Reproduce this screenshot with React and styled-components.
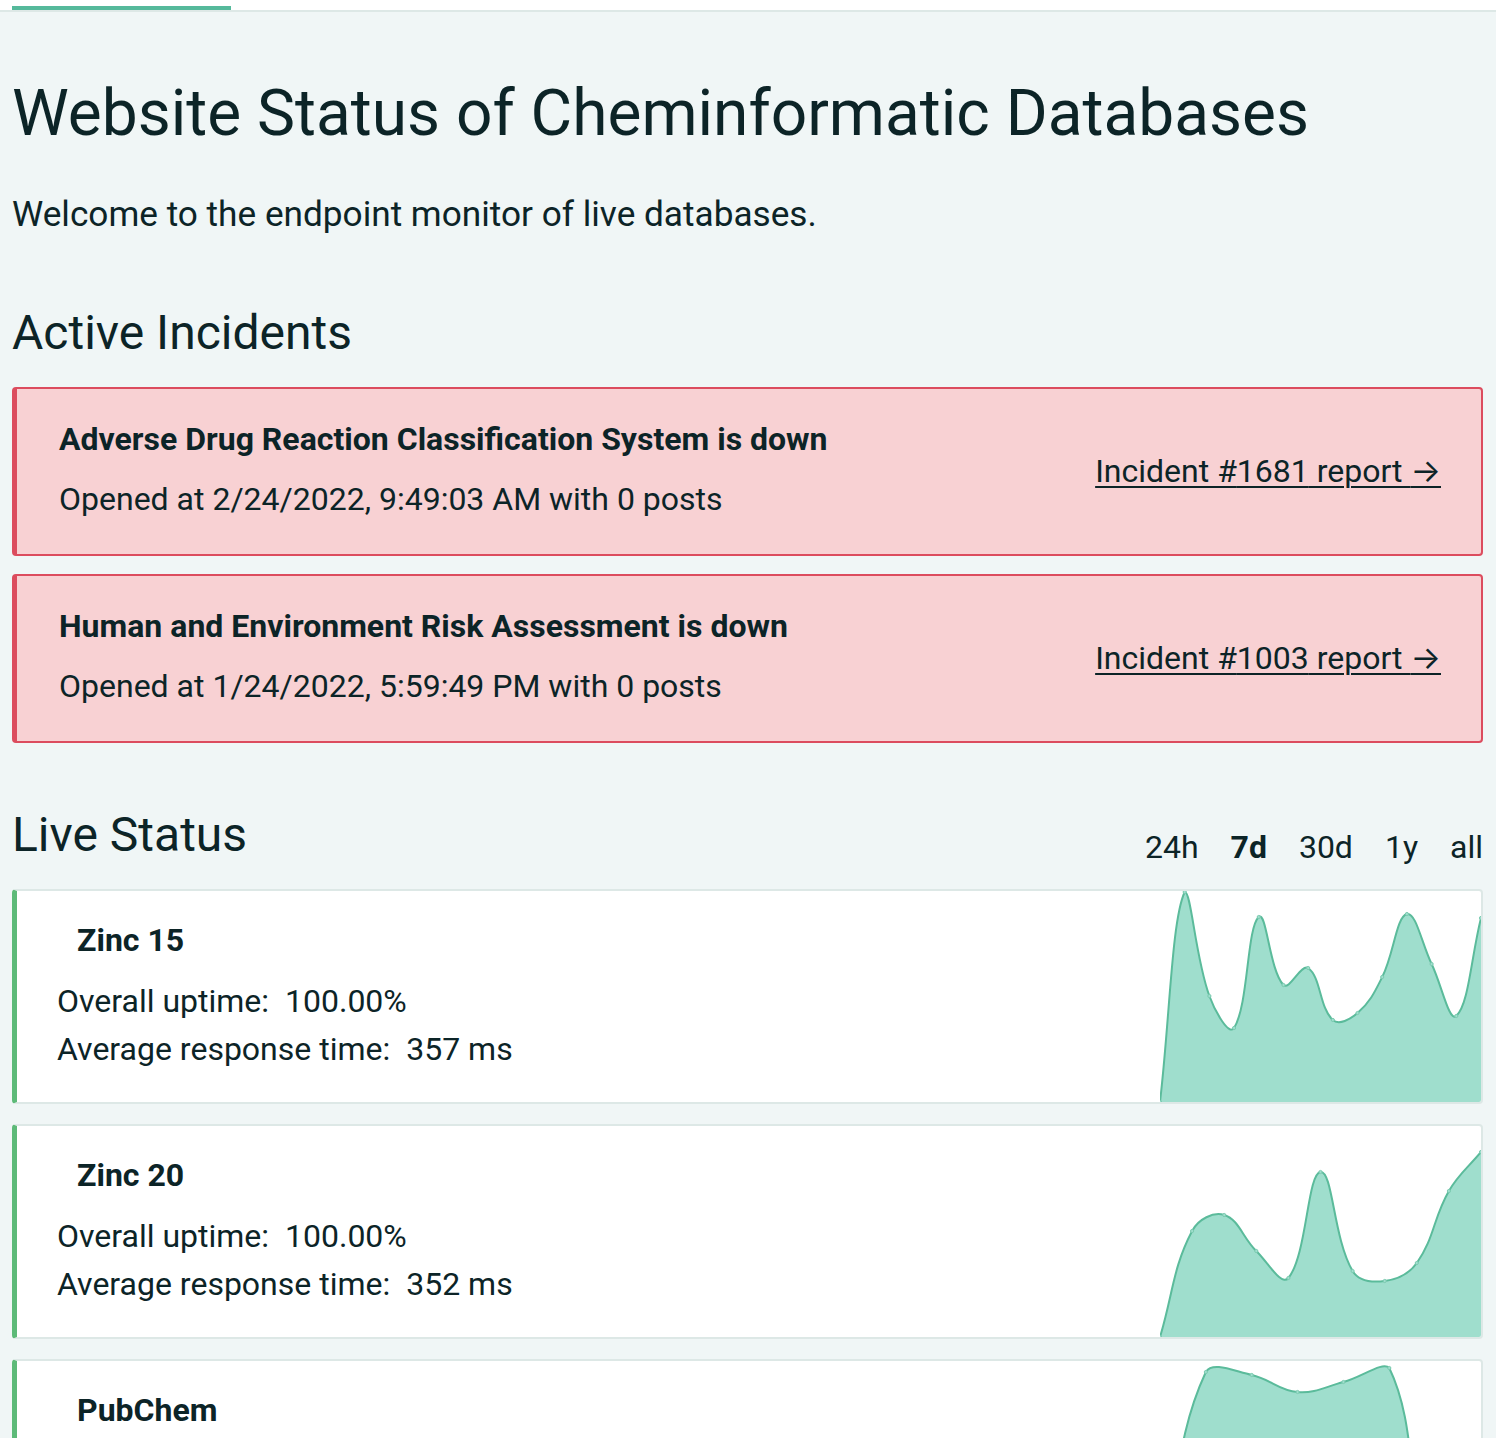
import React from "react";
import styled, { createGlobalStyle } from "styled-components";

const GlobalStyle = createGlobalStyle`
  body {
    margin: 0;
    background-color: #f0f6f6;
    color: #0c2427;
    font-family: Roboto, "Liberation Sans", sans-serif;
  }
`;

const incidents = [
  {
    id: 1681,
    title: "Adverse Drug Reaction Classification System is down",
    opened: "2/24/2022, 9:49:03 AM",
  },
  {
    id: 1003,
    title: "Human and Environment Risk Assessment is down",
    opened: "1/24/2022, 5:59:49 PM",
  },
];

const sites = [
  {
    name: "Zinc 15",
    uptime: "100.00%",
    time: "357 ms",
    points: [211, 1, 105, 137, 26, 94, 77, 129, 122, 86, 23, 73, 125, 27],
  },
  {
    name: "Zinc 20",
    uptime: "100.00%",
    time: "352 ms",
    points: [211, 105, 89, 125, 152, 46, 145, 155, 137, 65, 26],
  },
  {
    name: "PubChem",
    uptime: "100.00%",
    time: "410 ms",
    points: [211, 11, 14, 31, 21, 7, 211, 211],
  },
];

const ranges = ["24h", "7d", "30d", "1y", "all"];

const CHART_W = 321;
const CHART_H = 211;

// same spline as chart.js with tension 0.4
function splinePath(values) {
  const n = values.length;
  const pts = values.map((v, i) => ({ x: (i * CHART_W) / (n - 1), y: v }));
  const clamp = (v, max) => Math.max(0, Math.min(max, v));
  const cps = pts.map((p, i) => {
    const prev = pts[i - 1] || p;
    const next = pts[i + 1] || p;
    const d01 = Math.hypot(p.x - prev.x, p.y - prev.y);
    const d12 = Math.hypot(next.x - p.x, next.y - p.y);
    let s01 = d01 / (d01 + d12);
    let s12 = d12 / (d01 + d12);
    if (isNaN(s01)) s01 = 0;
    if (isNaN(s12)) s12 = 0;
    const fa = 0.4 * s01;
    const fb = 0.4 * s12;
    return {
      px: clamp(p.x - fa * (next.x - prev.x), CHART_W),
      py: clamp(p.y - fa * (next.y - prev.y), CHART_H),
      nx: clamp(p.x + fb * (next.x - prev.x), CHART_W),
      ny: clamp(p.y + fb * (next.y - prev.y), CHART_H),
    };
  });
  let d = `M${pts[0].x},${pts[0].y}`;
  for (let i = 1; i < n; i++) {
    const a = cps[i - 1];
    const b = cps[i];
    d += ` C${a.nx},${a.ny} ${b.px},${b.py} ${pts[i].x},${pts[i].y}`;
  }
  return { line: d, area: `${d} L${CHART_W},${CHART_H} L0,${CHART_H} Z`, pts };
}

function Chart({ points }) {
  const { line, area, pts } = splinePath(points);
  return (
    <ChartBox viewBox={`0 0 ${CHART_W} ${CHART_H}`} preserveAspectRatio="none">
      <path d={area} fill="#9fdecd" />
      <path d={line} fill="none" stroke="#5bbb9b" strokeWidth="2" />
      {pts.map((p, i) => (
        <circle key={i} cx={p.x} cy={p.y} r="1.6" fill="#9fdecd" stroke="#7ccbb1" strokeWidth="1" />
      ))}
    </ChartBox>
  );
}

export default function App() {
  return (
    <>
      <GlobalStyle />
      <Nav>
        <TabLine />
      </Nav>
      <Main>
        <Title>Website Status of Cheminformatic Databases</Title>
        <Intro>Welcome to the endpoint monitor of live databases.</Intro>

        <SectionTitle>Active Incidents</SectionTitle>
        <IncidentList>
          {incidents.map((inc) => (
            <Incident key={inc.id}>
              <div>
                <IncidentTitle>{inc.title}</IncidentTitle>
                <IncidentMeta>Opened at {inc.opened} with 0 posts</IncidentMeta>
              </div>
              <ReportLink href="#">
                Incident #{inc.id} report <Arrow>→</Arrow>
              </ReportLink>
            </Incident>
          ))}
        </IncidentList>

        <LiveHeader>
          <SectionTitle $flush>Live Status</SectionTitle>
          <Ranges>
            {ranges.map((r) => (
              <RangeItem key={r} $active={r === "7d"}>{r}</RangeItem>
            ))}
          </Ranges>
        </LiveHeader>

        <SiteList>
          {sites.map((s) => (
            <Site key={s.name}>
              <SiteInfo>
                <SiteName>{s.name}</SiteName>
                <SiteLine>Overall uptime: <Value>{s.uptime}</Value></SiteLine>
                <SiteLine>Average response time: <Value>{s.time}</Value></SiteLine>
              </SiteInfo>
              <Chart points={s.points} />
            </Site>
          ))}
        </SiteList>
      </Main>
    </>
  );
}

const Nav = styled.nav`
  height: 10px;
  background: #ffffff;
  border-bottom: 2px solid #dde8e6;
  padding-left: 12px;
  display: flex;
  align-items: flex-end;
`;

const TabLine = styled.div`
  width: 219px;
  height: 4px;
  background: #55b99b;
`;

const Main = styled.main`
  padding: 0 13px 0 12px;
`;

const Title = styled.h1`
  margin: 64px 0 0;
  font-size: 64px;
  font-weight: 400;
  line-height: 75px;
`;

const Intro = styled.p`
  margin: 43px 0 0;
  font-size: 35.2px;
  line-height: 41px;
`;

const SectionTitle = styled.h2`
  margin: ${(p) => (p.$flush ? "0 0 3px" : "70px 0 0")};
  font-size: 48px;
  font-weight: 400;
  line-height: 56px;
`;

const IncidentList = styled.div`
  margin-top: 26px;
  display: flex;
  flex-direction: column;
  gap: 18px;
`;

const Incident = styled.div`
  display: flex;
  align-items: center;
  justify-content: space-between;
  background: #f8d1d3;
  border: 2px solid #dc4c5e;
  border-left-width: 5px;
  border-radius: 4px;
  padding: 26px 40px 31px 42px;
`;

const IncidentTitle = styled.div`
  font-size: 32px;
  font-weight: 700;
  line-height: 48px;
  margin-bottom: 12px;
`;

const IncidentMeta = styled.div`
  font-size: 32px;
  line-height: 48px;
`;

const ReportLink = styled.a`
  color: #0c2427;
  font-size: 32px;
  line-height: 38px;
  margin-top: 4px;
  text-decoration: underline;
  text-decoration-thickness: 2px;
  text-underline-offset: 4px;
`;

const Arrow = styled.span`
  font-family: Inter, "DejaVu Sans", sans-serif;
  font-size: 32px;
`;

const LiveHeader = styled.div`
  margin-top: 64px;
  display: flex;
  align-items: flex-end;
  justify-content: space-between;
`;

const Ranges = styled.div`
  display: flex;
  gap: 32px;
`;

const RangeItem = styled.span`
  font-size: 32px;
  line-height: 38px;
  font-weight: ${(p) => (p.$active ? 700 : 400)};
`;

const SiteList = styled.div`
  margin-top: 23px;
  display: flex;
  flex-direction: column;
  gap: 20px;
`;

const Site = styled.div`
  display: flex;
  background: #ffffff;
  border: 2px solid #dde8e6;
  border-left: 5px solid #5dba78;
  border-radius: 4px;
  overflow: hidden;
`;

const SiteInfo = styled.div`
  flex: 1;
  padding: 25px 0 29px 40px;
`;

const SiteName = styled.div`
  font-size: 32px;
  font-weight: 700;
  line-height: 48px;
  padding-left: 20px;
  margin-bottom: 13px;
`;

const SiteLine = styled.div`
  font-size: 32px;
  line-height: 48px;
`;

const Value = styled.span`
  margin-left: 8px;
`;

const ChartBox = styled.svg`
  width: ${CHART_W}px;
  flex-shrink: 0;
  align-self: stretch;
  display: block;
`;
